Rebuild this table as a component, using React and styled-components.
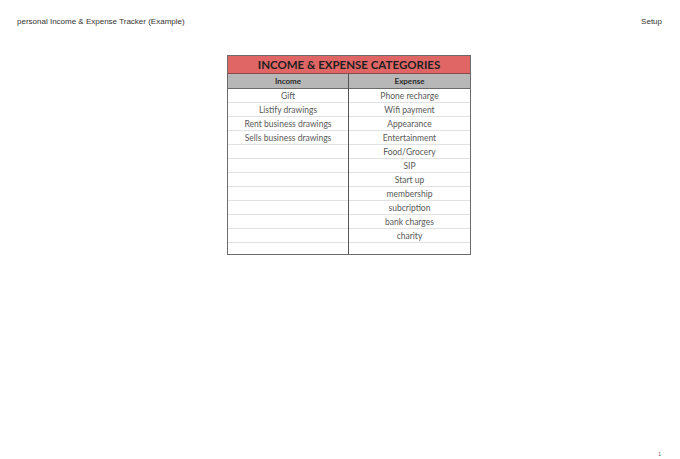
import styled, { createGlobalStyle } from "styled-components";

const GlobalStyle = createGlobalStyle`
  html, body {
    margin: 0;
    padding: 0;
    background: #ffffff;
  }
`;

const income = ["Gift", "Listify drawings", "Rent business drawings", "Sells business drawings"];
const expense = [
  "Phone recharge",
  "Wifi payment",
  "Appearance",
  "Entertainment",
  "Food/Grocery",
  "SIP",
  "Start up",
  "membership",
  "subcription",
  "bank charges",
  "charity",
];
const ROWS = 12;

export default function App() {
  const rows = Array.from({ length: ROWS }, (_, i) => [income[i] || "", expense[i] || ""]);

  return (
    <Page>
      <GlobalStyle />
      <TopBar>
        <DocTitle>personal Income &amp; Expense Tracker (Example)</DocTitle>
        <DocTitle>Setup</DocTitle>
      </TopBar>
      <Sheet>
        <Table>
          <Title>INCOME &amp; EXPENSE CATEGORIES</Title>
          <HeadRow>
            <HeadCell>Income</HeadCell>
            <HeadCell $last>Expense</HeadCell>
          </HeadRow>
          {rows.map(([inc, exp], i) => (
            <Row key={i} $short={i === ROWS - 1}>
              <Cell>{inc}</Cell>
              <Cell $last>{exp}</Cell>
            </Row>
          ))}
        </Table>
      </Sheet>
      <PageNum>1</PageNum>
    </Page>
  );
}

const Page = styled.div`
  width: 680px;
  height: 459px;
  position: relative;
  overflow: hidden;
  font-family: "Liberation Sans", Arial, sans-serif;
`;

const TopBar = styled.div`
  display: flex;
  justify-content: space-between;
  padding: 16px 18px 0 17px;
  height: 40px;
  box-sizing: border-box;
`;

const DocTitle = styled.span`
  font-size: 8px;
  color: #333333;
  line-height: 11px;
`;

const Sheet = styled.div`
  display: flex;
  padding: 15px 0 0 227px;
`;

const Table = styled.div`
  width: 244px;
  border: 1px solid #6b6b6b;
  box-sizing: border-box;
  font-family: Lato, "Noto Sans", sans-serif;
`;

const Title = styled.div`
  height: 18px;
  background: #e06666;
  color: #1f1f1f;
  font-weight: 700;
  font-size: 11.5px;
  line-height: 18px;
  text-align: center;
  border-bottom: 1px solid #8a4a4a;
  box-sizing: border-box;
`;

const HeadRow = styled.div`
  display: grid;
  grid-template-columns: 1fr 1fr;
  height: 15px;
  background: #b7b7b7;
  border-bottom: 1px solid #6b6b6b;
  box-sizing: border-box;
`;

const HeadCell = styled.div`
  font-size: 8px;
  font-weight: 700;
  color: #2a2a2a;
  text-align: center;
  line-height: 15px;
  border-right: ${(p) => (p.$last ? "none" : "1px solid #555555")};
`;

const Row = styled.div`
  display: grid;
  grid-template-columns: 1fr 1fr;
  height: ${(p) => (p.$short ? "11px" : "14px")};
  border-bottom: ${(p) => (p.$short ? "none" : "1px solid #e2e2e2")};
  box-sizing: border-box;
`;

const Cell = styled.div`
  font-size: 8.5px;
  color: #595959;
  text-align: center;
  line-height: 14px;
  white-space: nowrap;
  border-right: ${(p) => (p.$last ? "none" : "1px solid #555555")};
`;

const PageNum = styled.div`
  position: absolute;
  right: 19px;
  bottom: 2px;
  font-size: 5px;
  color: #555555;
`;
